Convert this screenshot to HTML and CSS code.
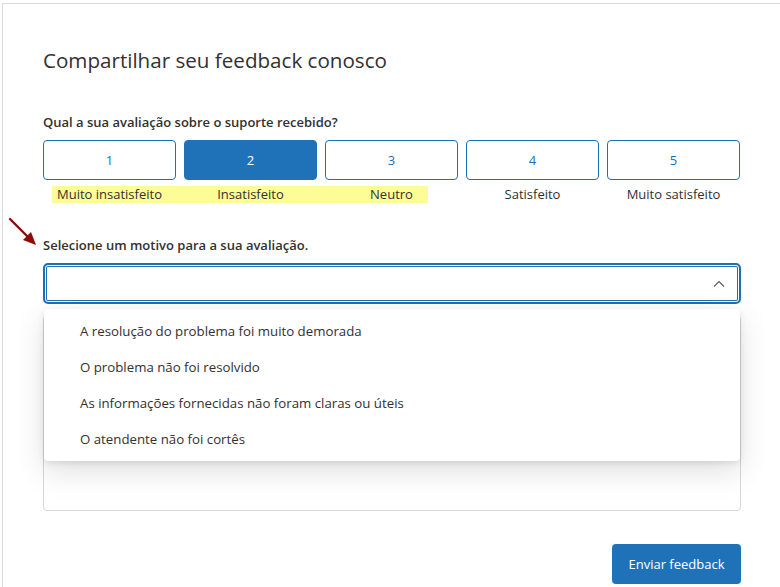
FILE: index.html
```html
<!DOCTYPE html>
<html lang="pt">
<head>
<meta charset="utf-8">
<link rel="stylesheet" href="styles.css">
</head>
<body>
<div class="card">
  <svg class="arrow" width="34" height="34" viewBox="0 0 34 34">
    <line x1="4" y1="4" x2="22" y2="22" stroke="#8e0a0a" stroke-width="2.4" stroke-linecap="round"/>
    <polygon points="30,30 17,25 25,17" fill="#8e0a0a"/>
  </svg>
  <h1 class="title">Compartilhar seu feedback conosco</h1>
  <div class="label q1">Qual a sua avaliação sobre o suporte recebido?</div>
  <div class="rating">
    <button class="rate">1</button>
    <button class="rate selected">2</button>
    <button class="rate">3</button>
    <button class="rate">4</button>
    <button class="rate">5</button>
  </div>
  <div class="scale">
    <div class="hl"></div>
    <span class="c1">Muito insatisfeito</span>
    <span class="c2">Insatisfeito</span>
    <span class="c3">Neutro</span>
    <span class="c4">Satisfeito</span>
    <span class="c5">Muito satisfeito</span>
  </div>
  <div class="label q2">Selecione um motivo para a sua avaliação.</div>
  <div class="field">
    <div class="select">
      <svg class="chev" width="12" height="8" viewBox="0 0 12 8">
        <polyline points="1,6.5 6,1.5 11,6.5" fill="none" stroke="#605e5c" stroke-width="1.2"/>
      </svg>
    </div>
    <ul class="menu">
      <li>A resolução do problema foi muito demorada</li>
      <li>O problema não foi resolvido</li>
      <li>As informações fornecidas não foram claras ou úteis</li>
      <li>O atendente não foi cortês</li>
    </ul>
    <div class="textarea"></div>
  </div>
  <div class="actions">
    <button class="submit">Enviar feedback</button>
  </div>
</div>
</body>
</html>
```
FILE: styles.css
```css
html, body {
  margin: 0;
  padding: 0;
  background: #ffffff;
  overflow: hidden;
}
body {
  font-family: "Open Sans", "Noto Sans", sans-serif;
  color: #323130;
  width: 780px;
  height: 587px;
}
.card {
  position: relative;
  margin: 3px 0 0 2px;
  border-top: 1px solid #dcdcdc;
  border-left: 1px solid #dcdcdc;
  padding: 42px 40px 0 40px;
  width: 698px;
  height: 541px;
  overflow: hidden;
}
.arrow {
  position: absolute;
  left: 3px;
  top: 211px;
}
.title {
  margin: 0;
  font-size: 20.6px;
  line-height: 28px;
  font-weight: 400;
  color: #323130;
}
.label {
  font-size: 13px;
  font-weight: 600;
  line-height: 20px;
  color: #323130;
}
.q1 { margin-top: 38px; }
.q2 { margin-top: 31px; }
.rating {
  margin-top: 8px;
  display: flex;
  gap: 8px;
}
.rate {
  width: 133px;
  height: 40px;
  box-sizing: border-box;
  border: 1px solid #1f6fb4;
  border-radius: 4px;
  background: #fff;
  color: #1f6fb4;
  font-family: "Open Sans", "Noto Sans", sans-serif;
  font-size: 13px;
  padding: 0;
}
.rate.selected {
  background: #1f72b8;
  border-color: #1f72b8;
  color: #fff;
}
.scale {
  margin-top: 4px;
  display: grid;
  grid-template-columns: repeat(5, 133px);
  column-gap: 8px;
  font-size: 13px;
  line-height: 20px;
  color: #323130;
}
.scale span {
  grid-row: 1;
  text-align: center;
  position: relative;
}
.c1 { grid-column: 1; }
.c2 { grid-column: 2; }
.c3 { grid-column: 3; }
.c4 { grid-column: 4; }
.c5 { grid-column: 5; }
.hl {
  grid-row: 1;
  grid-column: 1 / 4;
  margin: 2px 30px 1px 9px;
  background: #fdfd98;
}
.field {
  position: relative;
  margin-top: 8px;
}
.select {
  height: 41px;
  box-sizing: border-box;
  border: 2px solid #1f6fb4;
  border-radius: 5px;
  box-shadow: inset 0 0 0 1px #fff, inset 0 0 0 2px #1f6fb4;
  display: flex;
  align-items: center;
  justify-content: flex-end;
  padding-right: 14px;
}
.chev { display: block; margin-top: 1px; }
.menu {
  position: absolute;
  left: 1px;
  right: 1px;
  top: 46px;
  margin: 0;
  padding: 4px 0;
  list-style: none;
  background: #fff;
  border-radius: 4px;
  box-shadow: 0 10px 30px rgba(0,0,0,0.13), 0 2px 6px rgba(0,0,0,0.10);
  z-index: 2;
}
.menu li {
  height: 36px;
  line-height: 36px;
  padding-left: 36px;
  font-size: 13.25px;
  color: #323130;
}
.textarea {
  margin-top: 12px;
  height: 195px;
  box-sizing: border-box;
  border: 1px solid #d6d6d6;
  border-radius: 4px;
}
.actions {
  margin-top: 33px;
  display: flex;
  justify-content: flex-end;
}
.submit {
  height: 40px;
  width: 129px;
  border: none;
  border-radius: 4px;
  background: #1f72b8;
  color: #fff;
  font-family: "Open Sans", "Noto Sans", sans-serif;
  font-size: 13px;
  padding: 0;
}
```
